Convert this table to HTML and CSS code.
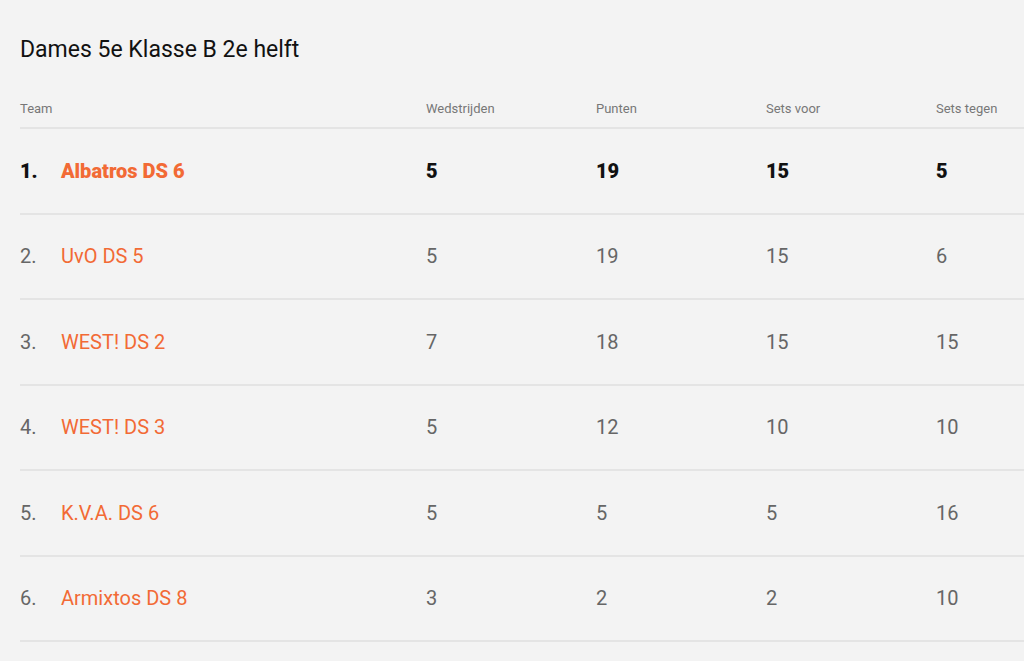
FILE: index.html
```html
<!DOCTYPE html>
<html lang="nl">
<head>
<meta charset="utf-8">
<title>Dames 5e Klasse B 2e helft</title>
<link rel="stylesheet" href="styles.css">
</head>
<body>
<main class="page">
  <h1 class="title">Dames 5e Klasse B 2e helft</h1>
  <table class="standings">
    <thead>
      <tr>
        <th class="col-team">Team</th>
        <th class="col-num">Wedstrijden</th>
        <th class="col-num">Punten</th>
        <th class="col-num">Sets voor</th>
        <th class="col-last">Sets tegen</th>
      </tr>
    </thead>
    <tbody>
      <tr class="own">
        <td class="col-team"><span class="pos">1.</span><a class="team" href="#">Albatros DS 6</a></td>
        <td>5</td><td>19</td><td>15</td><td>5</td>
      </tr>
      <tr>
        <td class="col-team"><span class="pos">2.</span><a class="team" href="#">UvO DS 5</a></td>
        <td>5</td><td>19</td><td>15</td><td>6</td>
      </tr>
      <tr>
        <td class="col-team"><span class="pos">3.</span><a class="team" href="#">WEST! DS 2</a></td>
        <td>7</td><td>18</td><td>15</td><td>15</td>
      </tr>
      <tr>
        <td class="col-team"><span class="pos">4.</span><a class="team" href="#">WEST! DS 3</a></td>
        <td>5</td><td>12</td><td>10</td><td>10</td>
      </tr>
      <tr>
        <td class="col-team"><span class="pos">5.</span><a class="team" href="#">K.V.A. DS 6</a></td>
        <td>5</td><td>5</td><td>5</td><td>16</td>
      </tr>
      <tr>
        <td class="col-team"><span class="pos">6.</span><a class="team" href="#">Armixtos DS 8</a></td>
        <td>3</td><td>2</td><td>2</td><td>10</td>
      </tr>
    </tbody>
  </table>
</main>
</body>
</html>
```

FILE: styles.css
```css
html, body {
  margin: 0;
  padding: 0;
  background: #f3f3f3;
  overflow: hidden;
}
body {
  font-family: Roboto, "Liberation Sans", sans-serif;
  color: #666;
}
.page {
  padding: 36px 0 0 20px;
}
.title {
  margin: 0;
  font-size: 23px;
  font-weight: 400;
  line-height: 28px;
  color: #111;
}
.standings {
  margin-top: 37px;
  border-collapse: collapse;
  table-layout: fixed;
  width: 1004px;
}
.standings th {
  font-size: 13px;
  font-weight: 400;
  color: #777;
  text-align: left;
  padding: 0 0 11px;
  line-height: 15px;
  border-bottom: 2px solid #e4e4e4;
  white-space: nowrap;
}
.standings th.col-team { width: 406px; }
.standings th.col-num { width: 170px; }
.standings th.col-last { width: 88px; }
.standings td {
  height: 83.5px;
  padding: 0;
  font-size: 20px;
  line-height: 24px;
  vertical-align: middle;
  border-bottom: 2px solid #e4e4e4;
  color: #666;
}
.pos {
  display: inline-block;
  width: 41px;
}
.team {
  color: #f26a35;
  text-decoration: none;
}
.own td {
  font-weight: 900;
  color: #111;
}
.own .team { color: #f26a35; }
```
